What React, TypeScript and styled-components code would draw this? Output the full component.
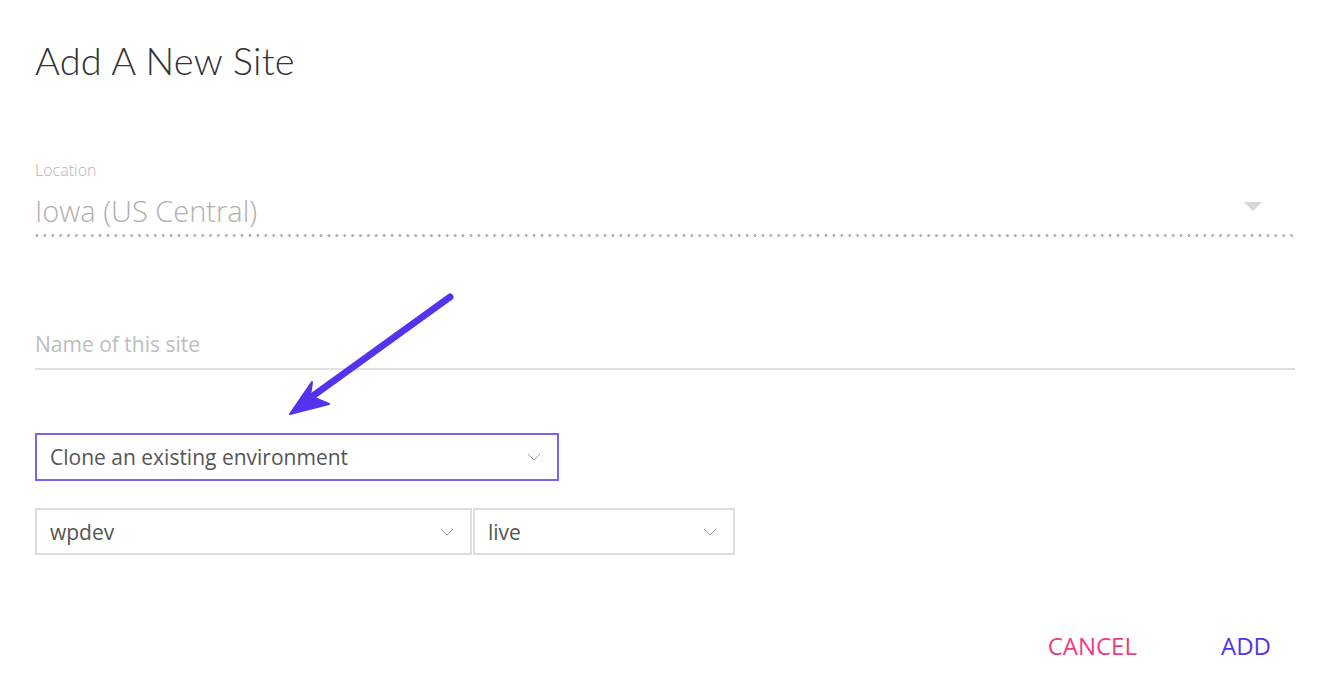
import styled, { createGlobalStyle } from "styled-components";

const GlobalStyle = createGlobalStyle`
    body {
        margin: 0;
        background: #ffffff;
        font-family: "Open Sans", "Liberation Sans", sans-serif;
    }
`;

const Page = styled.div`
    position: relative;
    width: 1333px;
    height: 682px;
    box-sizing: border-box;
    padding: 37px 38px 0 35px;
    overflow: hidden;
`;

const Title = styled.h1`
    margin: 0;
    font-family: "Lato", "Open Sans", sans-serif;
    font-weight: 300;
    font-size: 38px;
    line-height: 46px;
    color: #333333;
    letter-spacing: 0.2px;
`;

const Field = styled.div<{ $top: number }>`
    position: relative;
    margin-top: ${(p) => p.$top}px;
`;

const Label = styled.div`
    font-size: 16px;
    line-height: 20px;
    font-weight: 300;
    color: #b5b5b5;
`;

const Value = styled.div`
    margin-top: 14px;
    font-size: 29px;
    line-height: 34px;
    font-weight: 300;
    color: #b0b0b0;
`;

const Caret = styled.span`
    position: absolute;
    right: 33px;
    top: 42px;
    width: 0;
    height: 0;
    border-left: 9px solid transparent;
    border-right: 9px solid transparent;
    border-top: 9px solid #d6d6d6;
`;

const DottedLine = styled.div`
    margin-top: 6px;
    height: 3px;
    background-image: radial-gradient(circle, #b3b3b3 1.3px, transparent 1.7px);
    background-size: 7.9px 3px;
    background-repeat: repeat-x;
    background-position: -2px 0;
`;

const TextInput = styled.div`
    padding-bottom: 10px;
    border-bottom: 2px solid #e0e0e0;
    font-size: 21px;
    line-height: 28px;
    color: #bdbdbd;
`;

const Select = styled.div<{ $width: number; $active?: boolean }>`
    display: flex;
    align-items: center;
    justify-content: space-between;
    box-sizing: border-box;
    width: ${(p) => p.$width}px;
    height: ${(p) => (p.$active ? 48 : 47)}px;
    padding: 0 16px 0 13px;
    border: 2px solid ${(p) => (p.$active ? "#7b62ef" : "#dddddd")};
    font-size: 21px;
    color: #555555;
`;

const SelectRow = styled.div`
    display: flex;
    gap: 1px;
    margin-top: 27px;
`;

const Actions = styled.div`
    display: flex;
    justify-content: flex-end;
    gap: 36px;
    margin-top: 75px;
`;

const ActionButton = styled.button<{ $color: string }>`
    border: none;
    background: none;
    padding: 0 24px;
    font-family: "Open Sans", "Liberation Sans", sans-serif;
    font-size: 24px;
    line-height: 32px;
    color: ${(p) => p.$color};
    cursor: pointer;
`;

const Pointer = styled.svg`
    position: absolute;
    left: 280px;
    top: 285px;
`;

const Chevron = () => (
    <svg width="14" height="8" viewBox="0 0 14 8">
        <path d="M1 1 L7 7 L13 1" fill="none" stroke="#9a9a9a" strokeWidth="1" />
    </svg>
);

const App = () => {
    return (
        <Page>
            <GlobalStyle />
            <Title>Add A New Site</Title>

            <Field $top={77}>
                <Label>Location</Label>
                <Value>Iowa (US Central)</Value>
                <Caret />
                <DottedLine />
            </Field>

            <Field $top={93}>
                <TextInput>Name of this site</TextInput>
            </Field>

            <Field $top={63}>
                <Select $width={524} $active>
                    <span>Clone an existing environment</span>
                    <Chevron />
                </Select>
            </Field>

            <SelectRow>
                <Select $width={437}>
                    <span>wpdev</span>
                    <Chevron />
                </Select>
                <Select $width={262}>
                    <span>live</span>
                    <Chevron />
                </Select>
            </SelectRow>

            <Actions>
                <ActionButton $color="#f03d7e">CANCEL</ActionButton>
                <ActionButton $color="#5436ea">ADD</ActionButton>
            </Actions>

            <Pointer width="190" height="140" viewBox="0 0 190 140">
                <line
                    x1="170"
                    y1="12"
                    x2="30"
                    y2="113"
                    stroke="#5533ee"
                    strokeWidth="7"
                    strokeLinecap="round"
                />
                <path d="M10 129 L32 97 L30 111 L49 119 Z" fill="#5533ee" stroke="#5533ee" strokeWidth="2" strokeLinejoin="round" />
            </Pointer>
        </Page>
    );
};

export default App;
